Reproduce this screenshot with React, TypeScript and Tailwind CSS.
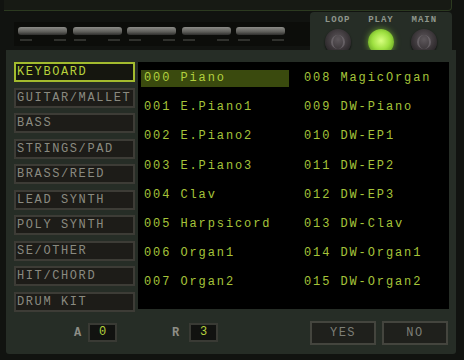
import React from "react";

const cats = [
  "KEYBOARD",
  "GUITAR/MALLET",
  "BASS",
  "STRINGS/PAD",
  "BRASS/REED",
  "LEAD SYNTH",
  "POLY SYNTH",
  "SE/OTHER",
  "HIT/CHORD",
  "DRUM KIT",
];

const col1 = [
  "000 Piano",
  "001 E.Piano1",
  "002 E.Piano2",
  "003 E.Piano3",
  "004 Clav",
  "005 Harpsicord",
  "006 Organ1",
  "007 Organ2",
];
const col2 = [
  "008 MagicOrgan",
  "009 DW-Piano",
  "010 DW-EP1",
  "011 DW-EP2",
  "012 DW-EP3",
  "013 DW-Clav",
  "014 DW-Organ1",
  "015 DW-Organ2",
];

const font = { fontFamily: '"Liberation Mono", "DejaVu Sans Mono", monospace' };

function Knob() {
  return (
    <div className="w-[26px] h-[26px] rounded-full bg-[radial-gradient(circle_at_50%_40%,#5e585c_0%,#383336_55%,#181618_100%)] shadow-[0_1px_2px_rgba(0,0,0,0.8)] flex items-center justify-center">
      <div className="w-[14px] h-[14px] rounded-full border-x-2 border-[#7a7479] opacity-60" />
    </div>
  );
}

function Led() {
  return (
    <div className="w-[26px] h-[26px] rounded-full bg-[radial-gradient(circle_at_50%_45%,#d8ff80_0%,#9ee040_45%,#5e9a1e_85%,#3a5a14_100%)] shadow-[0_0_6px_rgba(150,230,60,0.6)]" />
  );
}

function Slot() {
  return (
    <div className="w-[51px] flex flex-col items-center">
      <div className="w-[49px] h-[8px] rounded-[3px] bg-[linear-gradient(#8c8c88,#5e5e5a_60%,#2e2e2c)]" />
      <div className="mt-[4px] w-[46px] flex justify-between">
        <div className="w-[12px] h-[2px] bg-[#30312d]" />
        <div className="w-[12px] h-[2px] bg-[#30312d]" />
      </div>
    </div>
  );
}

export default function App() {
  return (
    <div
      className="w-[464px] h-[360px] bg-[#111310] overflow-hidden flex flex-col"
      style={font}
    >
      <div className="ml-[4px] w-[448px] h-[11px] bg-[#171a14] border-b border-r border-[#2c3a20] rounded-br-[4px] shrink-0" />
      <div className="flex h-[39px] shrink-0">
        <div className="ml-[14px] mt-[11px] w-[296px] h-[24px] bg-[#0c0d0a] flex items-start pt-[5px] pl-[3px] gap-[3.5px]">
          <Slot />
          <Slot />
          <Slot />
          <Slot />
          <Slot />
        </div>
        <div className="mt-[1px] w-[142px] bg-[#262d26] rounded-t-[4px] flex justify-around px-[6px] pt-[3px]">
          {["LOOP", "PLAY", "MAIN"].map((l, i) => (
            <div key={l} className="flex flex-col items-center">
              <div className="text-[9px] leading-[10px] tracking-[1px] text-[#8f968c] font-bold">
                {l}
              </div>
              <div className="mt-[4px]">{i === 1 ? <Led /> : <Knob />}</div>
            </div>
          ))}
        </div>
      </div>
      <div className="ml-[6px] w-[450px] h-[304px] bg-[#262d26] rounded-b-[3px] shrink-0 flex flex-col">
        <div className="flex pt-[12px] pl-[8px]">
          <div className="flex flex-col gap-[5.5px] w-[121px]">
            {cats.map((c, i) => (
              <div
                key={c}
                className={
                  i === 0
                    ? "h-[20px] border-2 border-[#a3bb2e] bg-[#15160f] text-[#b8d23c] text-[12px] tracking-[1.6px] leading-[16px] pl-[1px] whitespace-nowrap overflow-hidden"
                    : "h-[20px] border-2 border-[#3d3c36] bg-[#1d1c18] text-[#8a8a80] text-[12px] tracking-[1.6px] leading-[16px] pl-[1px] whitespace-nowrap overflow-hidden"
                }
              >
                {c}
              </div>
            ))}
          </div>
          <div className="ml-[3px] w-[311px] h-[247px] bg-black flex pt-[2px]">
            <div className="w-[166px] flex flex-col pl-[3px]">
              {col1.map((t, i) => (
                <div key={t} className="h-[29.2px] flex items-center">
                  <div
                    className={
                      i === 0
                        ? "w-[148px] h-[17px] bg-[#3a4a0e] text-[#b2d03e] text-[12px] tracking-[1.9px] leading-[17px] pl-[3px] whitespace-nowrap"
                        : "w-[148px] h-[17px] text-[#a6c43a] text-[12px] tracking-[1.9px] leading-[17px] pl-[3px] whitespace-nowrap"
                    }
                  >
                    {t}
                  </div>
                </div>
              ))}
            </div>
            <div className="flex flex-col">
              {col2.map((t) => (
                <div key={t} className="h-[29.2px] flex items-center">
                  <div className="h-[17px] text-[#a6c43a] text-[12px] tracking-[1.9px] leading-[17px] whitespace-nowrap">
                    {t}
                  </div>
                </div>
              ))}
            </div>
          </div>
        </div>
        <div className="flex items-center mt-[9px] h-[24px]">
          <div className="ml-[68px] w-[12px] text-[#8e8e86] text-[12px] font-bold">A</div>
          <div className="ml-[2px] w-[29px] h-[19px] bg-[#111210] border-2 border-[#393a34] flex items-center justify-center text-[#b4d03c] text-[12px] leading-[15px]">
            0
          </div>
          <div className="ml-[55px] w-[12px] text-[#8e8e86] text-[12px] font-bold">R</div>
          <div className="ml-[5px] w-[29px] h-[19px] bg-[#111210] border-2 border-[#393a34] flex items-center justify-center text-[#b4d03c] text-[12px] leading-[15px]">
            3
          </div>
          <div className="ml-[92px] w-[66px] h-[24px] bg-[#1f201c] border-2 border-[#44453e] flex items-center justify-center text-[#7d7e76] text-[12px] tracking-[1.5px]">
            YES
          </div>
          <div className="ml-[6px] w-[66px] h-[24px] bg-[#1f201c] border-2 border-[#44453e] flex items-center justify-center text-[#7d7e76] text-[12px] tracking-[1.5px]">
            NO
          </div>
        </div>
      </div>
    </div>
  );
}
